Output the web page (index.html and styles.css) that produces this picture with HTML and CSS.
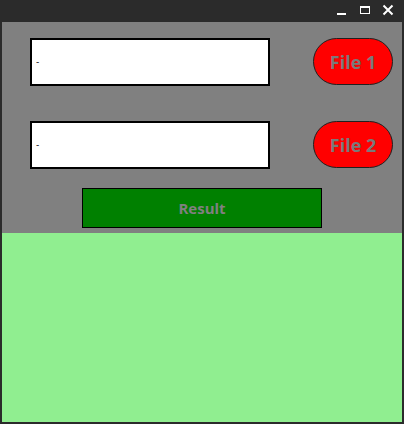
FILE: index.html
```html
<!DOCTYPE html>
<html>
<head>
<meta charset="utf-8">
<link rel="stylesheet" href="styles.css">
</head>
<body>
<div class="window">
  <div class="titlebar">
    <svg class="ctl" width="12" height="12" viewBox="0 0 12 12"><rect x="1" y="9" width="9" height="2" fill="#fff"/></svg>
    <svg class="ctl" width="12" height="12" viewBox="0 0 12 12"><rect x="1.5" y="2.5" width="9" height="7" fill="none" stroke="#fff" stroke-width="1"/><rect x="1" y="2" width="10" height="2" fill="#fff"/></svg>
    <svg class="ctl" width="12" height="12" viewBox="0 0 12 12"><path d="M1.5 1.5 L10.5 10.5 M10.5 1.5 L1.5 10.5" stroke="#fff" stroke-width="2"/></svg>
  </div>
  <div class="body">
    <div class="panel">
      <div class="row">
        <div class="field"><span class="caret">-</span></div>
        <button class="file">File 1</button>
      </div>
      <div class="row row2">
        <div class="field"><span class="caret">-</span></div>
        <button class="file">File 2</button>
      </div>
      <button class="result">Result</button>
    </div>
    <div class="output"></div>
  </div>
</div>
</body>
</html>
```

FILE: styles.css
```css
* { box-sizing: border-box; }
html, body { margin: 0; padding: 0; }
body {
  width: 404px;
  height: 424px;
  background: #2b2b2b;
  font-family: "DejaVu Sans", "Open Sans", sans-serif;
  overflow: hidden;
}
.window {
  width: 404px;
  height: 424px;
  display: flex;
  flex-direction: column;
}
.titlebar {
  height: 22px;
  display: flex;
  justify-content: flex-end;
  align-items: center;
  gap: 11px;
  padding-right: 10px;
  padding-bottom: 2px;
}
.ctl { display: block; }
.body {
  flex: 1;
  margin: 0 2px 2px 2px;
  display: flex;
  flex-direction: column;
}
.panel {
  height: 211px;
  background: #808080;
  padding: 16px 0 0 28px;
  display: flex;
  flex-direction: column;
}
.row {
  display: flex;
  align-items: flex-start;
  gap: 43px;
}
.row2 { margin-top: 35px; }
.field {
  width: 240px;
  height: 48px;
  background: #fff;
  border: 2px solid #000;
  display: flex;
  align-items: center;
  padding-left: 4px;
}
.caret {
  font-family: "DejaVu Sans", sans-serif;
  font-size: 9px;
  line-height: 1;
  color: #000;
}
.file {
  width: 80px;
  height: 47px;
  border-radius: 24px;
  background: #ff0000;
  border: 1px solid #202020;
  color: #7a7a7a;
  font-family: "Open Sans", "DejaVu Sans", sans-serif;
  font-weight: 700;
  font-size: 18px;
  padding: 0;
  margin: 0;
}
.result {
  margin: 19px 0 0 52px;
  width: 240px;
  height: 40px;
  background: #008000;
  border: 1px solid #000;
  color: #808080;
  font-family: "Open Sans", "DejaVu Sans", sans-serif;
  font-weight: 700;
  font-size: 15px;
  padding: 0;
}
.output {
  flex: 1;
  background: #90ee90;
}
```
